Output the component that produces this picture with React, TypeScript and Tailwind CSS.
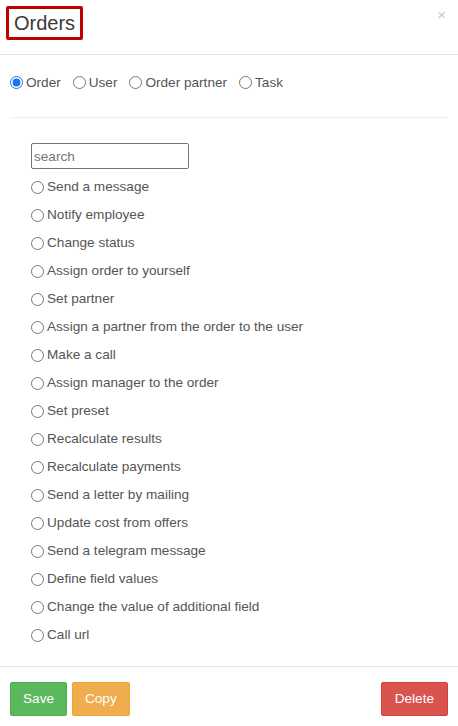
import { useState } from 'react';

const actions = [
  'Send a message',
  'Notify employee',
  'Change status',
  'Assign order to yourself',
  'Set partner',
  'Assign a partner from the order to the user',
  'Make a call',
  'Assign manager to the order',
  'Set preset',
  'Recalculate results',
  'Recalculate payments',
  'Send a letter by mailing',
  'Update cost from offers',
  'Send a telegram message',
  'Define field values',
  'Change the value of additional field',
  'Call url',
];

const types = ['Order', 'User', 'Order partner', 'Task'];

export default function App() {
  const [type, setType] = useState('Order');
  const [action, setAction] = useState('');

  return (
    <div className="w-[458px] h-[726px] bg-white text-[#555] text-[13.6px] font-['Liberation_Sans',Arial,sans-serif] flex flex-col">
      <div className="h-[55px] border-b border-[#e5e5e5] flex items-start justify-between pl-[6px] pr-[12px] pt-[6px]">
        <h4 className="border-[3px] border-[#c00000] rounded-[2px] px-[5px] h-[34px] flex items-center text-[20px] text-[#3a3a3a] leading-none">
          Orders
        </h4>
        <button className="text-[#c8c8c8] text-[15px] leading-none mt-[1px]">×</button>
      </div>

      <div className="flex-1 px-[10px]">
        <div className="flex items-center h-[26px] mt-[15px] gap-[12px]">
          {types.map((t) => (
            <label key={t} className="flex items-center gap-[3px]">
              <input
                type="radio"
                name="type"
                checked={type === t}
                onChange={() => setType(t)}
                className="m-0 w-[13px] h-[13px] accent-[#1a73e8]"
              />
              <span>{t}</span>
            </label>
          ))}
        </div>

        <div className="border-t border-[#eee] mt-[21px]" />

        <div className="pl-[21px] pt-[25px]">
          <input
            type="text"
            placeholder="search"
            className="w-[158px] h-[26px] border border-[#767676] rounded-[2px] px-[2px] text-[13.6px] placeholder:text-[#757575] outline-none"
          />
          <div className="flex flex-col mt-[4px]">
            {actions.map((a) => (
              <label key={a} className="flex items-center h-[28px] gap-[3px]">
                <input
                  type="radio"
                  name="action"
                  checked={action === a}
                  onChange={() => setAction(a)}
                  className="m-0 w-[13px] h-[13px] accent-[#1a73e8]"
                />
                <span>{a}</span>
              </label>
            ))}
          </div>
        </div>
      </div>

      <div className="border-t border-[#e5e5e5] h-[60px] flex items-start justify-between px-[10px] pt-[15px]">
        <div className="flex gap-[5px]">
          <button className="h-[34px] px-[12px] bg-[#5cb85c] border border-[#4cae4c] text-white rounded-[2px]">Save</button>
          <button className="h-[34px] px-[12px] bg-[#f0ad4e] border border-[#eea236] text-white rounded-[2px]">Copy</button>
        </div>
        <button className="h-[34px] px-[13px] bg-[#d9534f] border border-[#d43f3a] text-white rounded-[2px]">Delete</button>
      </div>
    </div>
  );
}
